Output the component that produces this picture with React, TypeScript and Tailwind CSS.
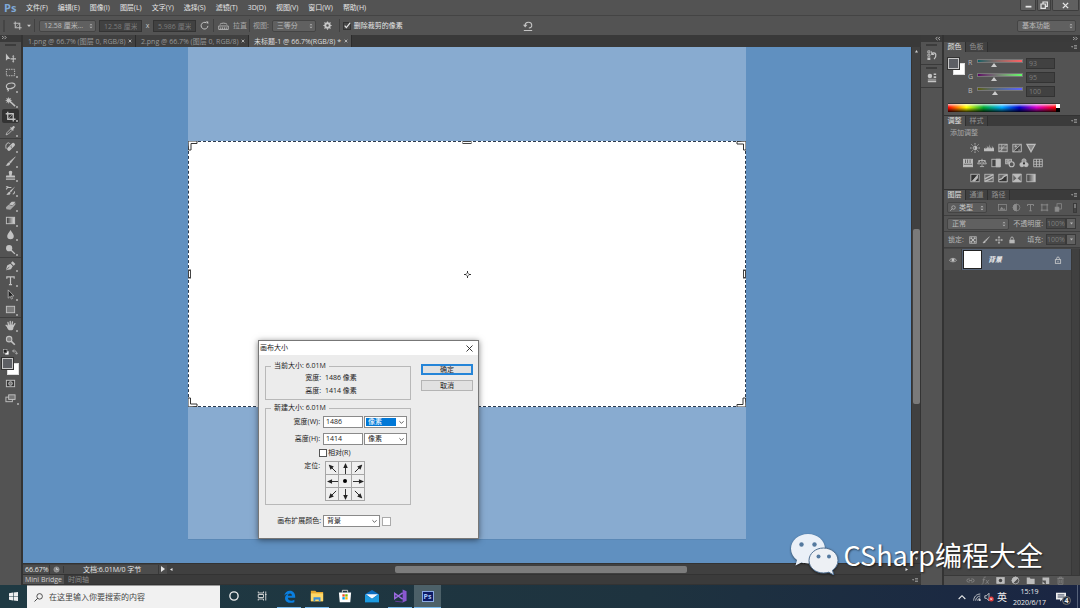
import type { ReactNode } from 'react';
import { useState } from 'react';
import clsx from 'clsx';

const MENUS = ['文件(F)', '编辑(E)', '图像(I)', '图层(L)', '文字(Y)', '选择(S)', '滤镜(T)', '3D(D)', '视图(V)', '窗口(W)', '帮助(H)'];

function Icon({ children, className = 'size-3', box = 12 }: { children: ReactNode; className?: string; box?: number }) {
  return (
    <svg viewBox={`0 0 ${box} ${box}`} className={clsx('shrink-0', className)} fill="none" stroke="currentColor" aria-hidden="true">
      {children}
    </svg>
  );
}

/* ---------- toolbox ---------- */

type Tool = { name: string; flyout?: boolean; art: ReactNode };

const cropArt = (
  <>
    <path d="M3 .8V9h8.500M.8 3H9v8.500" strokeWidth="1.400" />
    <path d="M3.500 8.500 8.500 3.500" strokeWidth=".6" />
  </>
);

const TOOL_GROUPS: Tool[][] = [
  [
    {
      name: '移动',
      art: (
        <>
          <path d="M1 1.500v8l2-2h2.800z" fill="currentColor" stroke="none" />
          <path d="M9 4.500v6M6 7.500h6" strokeWidth="1.100" />
          <path d="m9 3.400 1.300 1.400H7.700zM9 11.600l1.300-1.400H7.700z" fill="currentColor" stroke="none" />
        </>
      ),
    },
    { name: '矩形选框', flyout: true, art: <rect x="1.500" y="2.500" width="9" height="7" strokeDasharray="1.600 1" strokeWidth="1" /> },
    {
      name: '套索',
      flyout: true,
      art: (
        <path d="M3 8.200C.6 7 1 4 4 2.800s7-.6 7 1.700S6.800 9 4 8.300c-1.500-.3-2 .9-.7 1.200.8.200.6 1.500-.5 1.700" strokeWidth="1.300" />
      ),
    },
    {
      name: '魔棒',
      flyout: true,
      art: (
        <>
          <path d="m5 5.500 6 5.500" strokeWidth="1.700" />
          <path d="m4 .8.7 2.200 2-.9-.9 2 2.200.7-2.200.7.900 2-2-.9L4 8.800l-.7-2.200-2 .900.9-2L0 4.800l2.200-.7-.9-2 2 .9z" fill="currentColor" stroke="none" />
        </>
      ),
    },
    { name: '裁剪', flyout: true, art: cropArt },
    {
      name: '吸管',
      flyout: true,
      art: (
        <>
          <path d="m1.200 10.800 1-2.500 4-4 1.500 1.500-4 4z" strokeWidth=".9" />
          <path d="m5.500 3.200 1-.9.8.8 1.400-1.800c1-1 2.800.6 1.800 1.800L8.900 4.600l.8.800-1 1z" fill="currentColor" stroke="none" />
        </>
      ),
    },
  ],
  [
    {
      name: '污点修复画笔',
      flyout: true,
      art: (
        <>
          <path d="m4.300 8.700 4.600-4.600" strokeWidth="4" strokeLinecap="round" />
          <path d="M1.300 8.500C.3 5.500 1 2.500 3.500 2c1-.1 1.700.4 1.600 1.200" strokeWidth="1" />
          <path d="M5.600 6.300h.1M7 7.300h.1M7 5.600h.1" stroke="#535353" strokeWidth=".8" strokeLinecap="round" />
        </>
      ),
    },
    {
      name: '画笔',
      flyout: true,
      art: (
        <>
          <path d="M11.300.900 6 7.800 4.700 6.500z" fill="currentColor" strokeWidth=".5" />
          <path d="M4.300 6.800c1.300.4 1.700 1.700.8 2.800S2 11.200.6 10.300c1.700-.2 1.500-3 3.700-3.500z" fill="currentColor" stroke="none" />
        </>
      ),
    },
    {
      name: '仿制图章',
      flyout: true,
      art: (
        <path d="M4.800 6 4.200 3.200a1.900 1.900 0 1 1 3.600 0L7.200 6H10c.8 0 1 .5 1 2.200H1C1 6.500 1.200 6 2 6zM1 9.200h10v1.500H1z" fill="currentColor" stroke="none" />
      ),
    },
    {
      name: '历史记录画笔',
      flyout: true,
      art: (
        <>
          <path d="M11 1.500 6.500 8 5 6.700z" fill="currentColor" stroke="none" />
          <path d="M5 7.300c1.500.5 1.500 3-1 3.400-1 .2-2 0-2.700-.5C3 10 3 7.600 5 7.300z" fill="currentColor" stroke="none" />
          <path d="M1.200 4.800 3 2.600h4M1 2h2.700M8.500 10c1.500-.4 2-1.700 1.800-3" strokeWidth="1.100" />
        </>
      ),
    },
    {
      name: '橡皮擦',
      flyout: true,
      art: (
        <>
          <path d="m4.300 4.800 3-2.800h4L8.500 6z" fill="currentColor" stroke="none" />
          <path d="M1 8l2.800-2.700L8 6.500l3.300-3.700v2.400L5.800 10.500l-4.300-.3z" fill="currentColor" fillOpacity=".75" stroke="none" />
        </>
      ),
    },
    {
      name: '渐变',
      flyout: true,
      art: (
        <>
          <defs>
            <linearGradient id="toolGradient">
              <stop offset="0" stopColor="#333" />
              <stop offset="1" stopColor="#ddd" />
            </linearGradient>
          </defs>
          <rect x="1.500" y="2.500" width="9" height="7" fill="url(#toolGradient)" />
        </>
      ),
    },
    { name: '模糊', flyout: true, art: <path d="M6 1c1.500 3 3.600 4.500 3.600 6.700a3.600 3.600 0 0 1-7.200 0C2.400 5.500 4.500 4 6 1z" fill="currentColor" stroke="none" /> },
    {
      name: '减淡',
      flyout: true,
      art: (
        <>
          <circle cx="4.500" cy="4.500" r="3.400" fill="currentColor" stroke="none" />
          <path d="m6.500 6.500 4.300 4.300" strokeWidth="1.400" />
        </>
      ),
    },
  ],
  [
    {
      name: '钢笔',
      flyout: true,
      art: (
        <>
          <path d="M1 11.200 2.300 6l3.500-2L8.500 6.700l-2 3.500z" fill="currentColor" stroke="none" />
          <path d="m6.500 3.200 1.800-1.800 3 3-1.800 1.800z" fill="currentColor" stroke="none" />
          <path d="m1.500 10.800 3.300-3.400" stroke="#535353" strokeWidth=".8" />
        </>
      ),
    },
    { name: '横排文字', flyout: true, art: <path d="M2 4V2h8v2M6 2v8.300M4.300 10.400h3.400" strokeWidth="1.300" /> },
    { name: '路径选择', flyout: true, art: <path d="M3.500 1v9l2.200-2 1.300 3 1.200-.6L7 7.600h2.700z" fill="#222" strokeWidth=".8" /> },
    { name: '矩形', flyout: true, art: <rect x="1.500" y="2.500" width="9" height="7" fill="#7b7b7b" strokeWidth="1" /> },
  ],
  [
    {
      name: '抓手',
      flyout: true,
      art: (
        <>
          <path d="m4 6-.8-3.500M5.700 5.500V1.400M7.500 5.700l.7-3.700M9 7l1.800-3M3.500 8 1.200 5.800" strokeWidth="1.400" strokeLinecap="round" />
          <path d="M3 5.300h6.500l-.3 3.400c-.3 1.400-1 2.500-1.700 2.500h-3C3.500 10.500 2.500 9 2 7.300z" fill="currentColor" stroke="none" />
        </>
      ),
    },
    {
      name: '缩放',
      art: (
        <>
          <circle cx="4.500" cy="4.500" r="3" fill="#808080" strokeWidth="1.100" />
          <path d="m6.700 6.700 4 4" strokeWidth="1.700" />
        </>
      ),
    },
  ],
];

const GROUP_HEIGHTS = ['h-[89px]', 'h-[119px]', 'h-[60px]', 'h-[30px]'];

function Toolbox() {
  const [active, setActive] = useState('裁剪');
  return (
    <aside className="flex w-[23px] shrink-0 flex-col border-r-2 border-[#333] bg-[#535353] text-[#c2c2c2]">
      <div className="h-[7px] bg-[#3a3a3a] pl-0.5">
        <Icon className="h-[5px] w-[5px]" box={6}>
          <path d="m0 1 2 2-2 2M3 1l2 2-2 2" />
        </Icon>
      </div>
      <div className="mx-[5px] my-0.5 h-0.5 bg-[#3c3c3c]" />
      <div className="flex flex-col divide-y divide-[#3e3e3e] pt-0.5">
        {TOOL_GROUPS.map((group, i) => (
          <div key={i} className={clsx('flex flex-col px-0.5', GROUP_HEIGHTS[i])}>
            {group.map((t) => (
              <button
                key={t.name}
                type="button"
                aria-label={t.name}
                onClick={() => setActive(t.name)}
                className={clsx('relative flex flex-1 items-center justify-center rounded-xs', active === t.name && 'bg-[#333]')}
              >
                <Icon className="size-[11px]">{t.art}</Icon>
                {t.flyout && <i className="absolute right-px bottom-px size-[2px] bg-[#9c9c9c]" />}
              </button>
            ))}
          </div>
        ))}
      </div>
      <div className="flex h-2 items-center justify-between px-[3px]">
        <Icon className="size-[6px]">
          <rect x="5" y="5" width="6" height="6" fill="#fff" stroke="#ccc" />
          <rect x="1" y="1" width="7" height="7" fill="#222" stroke="#ccc" />
        </Icon>
        <Icon className="size-[6px]">
          <path d="M2 4h4c2 0 3 1 3 5M4 1 1 4l3 3M6.500 7.500 9 10.500l2.500-3" strokeWidth="1.600" />
        </Icon>
      </div>
      <div className="flex h-[20px] items-center justify-center">
        <Swatches />
      </div>
      <button type="button" aria-label="快速蒙版" className="flex h-[15px] items-center justify-center">
        <Icon className="size-[11px]">
          <rect x="1.500" y="2.500" width="9" height="7" fill="#333" />
          <circle cx="6" cy="6" r="2" fill="#777" />
        </Icon>
      </button>
      <button type="button" aria-label="屏幕模式" className="relative flex h-[15px] items-center justify-center">
        <Icon className="size-[11px]">
          <rect x="1" y="4.500" width="7" height="5" />
          <rect x="4" y="2" width="7" height="5" fill="#777" />
        </Icon>
        <i className="absolute right-0.5 bottom-px size-[2px] bg-[#9c9c9c]" />
      </button>
    </aside>
  );
}

function Swatches() {
  return (
    <div className="grid h-[17px] w-[17px] grid-cols-[5px_6px_6px] grid-rows-[5px_6px_6px]">
      <span className="col-span-2 col-start-2 row-span-2 row-start-2 border border-[#ddd] bg-white" />
      <span className="z-10 col-span-2 col-start-1 row-span-2 row-start-1 border border-[#c8c8c8] bg-[#5d5f64] outline outline-[#333]" />
    </div>
  );
}

/* ---------- menu + options ---------- */

function MenuBar() {
  return (
    <header className="flex h-[15px] shrink-0 items-center bg-[#535353] text-[7px] leading-[10px] text-[#e6e6e6]">
      <span className="w-[21px] pl-1 text-[11px] font-bold text-[#7fa9d8]">Ps</span>
      <nav className="flex">
        {MENUS.map((m) => (
          <button key={m} type="button" className="px-[5px] whitespace-nowrap">
            {m}
          </button>
        ))}
      </nav>
      <div className="mr-px ml-auto flex h-[11px] gap-px self-start text-[#e6e6e6]">
        <button type="button" aria-label="最小化" className="flex w-[16px] items-center justify-center rounded-b-xs border border-t-0 border-[#3d3d3d] bg-[#606060]">
          <Icon className="size-[7px]">
            <path d="M1 8h10" strokeWidth="3" />
          </Icon>
        </button>
        <button type="button" aria-label="还原" className="flex w-[14px] items-center justify-center rounded-b-xs border border-t-0 border-[#3d3d3d] bg-[#606060]">
          <Icon className="size-[8px]">
            <path d="M4.500 4V1.500h6.500V8H8.500M1.500 4.500H8V11H1.500z" strokeWidth="1.800" />
          </Icon>
        </button>
        <button type="button" aria-label="关闭" className="flex w-[27px] items-center justify-center rounded-b-xs border border-t-0 border-[#3d3d3d] bg-[#606060]">
          <Icon className="size-[7px]">
            <path d="m1.500 1.500 9 9m0-9-9 9" strokeWidth="2.400" />
          </Icon>
        </button>
      </div>
    </header>
  );
}

function DarkSelect({ label, value, className }: { label: string; value: string; className?: string }) {
  return (
    <span className={clsx('relative flex h-[12px]', className)}>
      <select
        aria-label={label}
        className="w-full appearance-none rounded-xs border border-[#444] bg-[#606060] pl-1 text-[7px] leading-[9px] text-[#bcbcbc]"
      >
        <option>{value}</option>
      </select>
      <Icon className="pointer-events-none absolute top-[3px] right-0.5 size-[6px] text-[#b0b0b0]">
        <path d="m3 4.500 3-3 3 3zM3 7.500l3 3 3-3z" fill="currentColor" stroke="none" />
      </Icon>
    </span>
  );
}

const divider = <span className="h-[13px] w-px shrink-0 bg-[#414141]" />;

function OptionsBar() {
  return (
    <div className="flex h-5 shrink-0 items-center border-t border-[#444] bg-[#535353] text-[7px] leading-[10px] text-[#8f8f8f]">
      <span className="ml-[3px] h-3 w-0.5 bg-[#454545]" />
      <Icon className="ml-2 size-[9px] text-[#bdbdbd]">{cropArt}</Icon>
      <Icon className="mr-[3px] ml-[5px] size-[4px] text-[#ccc]" box={6}>
        <path d="M0 1h6L3 4.500z" fill="currentColor" stroke="none" />
      </Icon>
      {divider}
      <DarkSelect label="裁剪预设" value="12.58 厘米..." className="ml-1 w-[57px]" />
      <input aria-label="宽度" defaultValue="12.58 厘米" className="ml-[3px] h-[12px] w-[43px] border border-[#333] bg-[#414141] px-1 text-[#7c7c7c]" />
      <span className="w-[11px] text-center text-[#c4c4c4]">x</span>
      <input aria-label="高度" defaultValue="5.986 厘米" className="h-[12px] w-[43px] border border-[#333] bg-[#414141] px-1 text-[#7c7c7c]" />
      <Icon className="mx-1 size-[9px] text-[#c4c4c4]">
        <path d="M10.500 6.500A4.500 4.500 0 1 1 8.500 2.500" strokeWidth="1.300" />
        <path d="M7.500.5h3.500v3.700z" fill="currentColor" stroke="none" />
      </Icon>
      {divider}
      <Icon className="mx-1 size-[11px] text-[#b8b8b8]">
        <path d="M.8 6.500h10.400v3.800H.8zM3 8v2M5 8v2M7 8v2M9 8v2" />
        <path d="M2 4.700C4 3 8 3 10 4.700" />
      </Icon>
      <button type="button" className="mr-0.5 whitespace-nowrap text-[#a8a8a8]">拉直</button>
      {divider}
      <span className="mx-[3px] whitespace-nowrap text-[#a8a8a8]">视图:</span>
      <DarkSelect label="视图" value="三等分" className="w-[44px]" />
      <button type="button" aria-label="其他裁切选项" className="mx-[7px] text-[#c8c8c8]">
        <Icon className="size-[9px]">
          <circle cx="6" cy="6" r="3" strokeWidth="2.600" />
          <path d="M6 .5v2M6 9.500v2M.5 6h2M9.500 6h2M2 2l1.500 1.500M8.500 8.500 10 10M10 2 8.500 3.500M3.500 8.500 2 10" strokeWidth="1.600" />
        </Icon>
      </button>
      {divider}
      <label className="ml-[3px] flex items-center gap-[3px] whitespace-nowrap text-[#e6e6e6]">
        <span className="relative flex">
          <input type="checkbox" defaultChecked className="size-[8px] appearance-none border border-[#333] bg-[#474747]" />
          <Icon className="pointer-events-none absolute top-0 left-0 size-[8px]">
            <path d="m2.500 5.500 2.500 3L11 1" strokeWidth="1.700" />
          </Icon>
        </span>
        删除裁剪的像素
      </label>
      <button type="button" aria-label="复位" className="ml-[120px] text-[#c4c4c4]">
        <Icon className="size-[10px]">
          <path d="M2.500 5A4 3.500 0 1 1 7 8.500M1 11.300h10" strokeWidth="1.300" />
          <path d="M0 4.500h5.400L2.600 7.700z" fill="currentColor" stroke="none" />
        </Icon>
      </button>
      <DarkSelect label="工作区" value="基本功能" className="mr-1 ml-auto w-[59px]" />
    </div>
  );
}

/* ---------- document ---------- */

const DOCS = [
  { title: '1.png @ 66.7% (图层 0, RGB/8)', width: 'w-[113px]' },
  { title: '2.png @ 66.7% (图层 0, RGB/8)', width: 'w-[113px]' },
  { title: '未标题-1 @ 66.7%(RGB/8) *', width: 'w-[103px]', active: true },
];

function DocumentTabs() {
  return (
    <div className="flex h-3 shrink-0 bg-[#393939] text-[7px] leading-[11px]">
      {DOCS.map((d) => (
        <div
          key={d.title}
          className={clsx(
            'flex items-center justify-between border-r border-[#2c2c2c] pr-[3px] pl-[5px] whitespace-nowrap',
            d.width,
            d.active ? 'bg-[#535353] text-[#dedede]' : 'bg-[#404040] text-[#989898]',
          )}
        >
          <button type="button">{d.title}</button>
          <button type="button" aria-label="关闭" className="text-[#c0c0c0]">
            <Icon className="size-[4px]" box={6}>
              <path d="m1 1 4 4m0-4L1 5" strokeWidth="1.300" />
            </Icon>
          </button>
        </div>
      ))}
    </div>
  );
}

function CropFrame() {
  const corner = 'M0 0h9v2.500H3V9H.5z';
  return (
    <div className="relative mt-[94px] h-[266px] bg-white outline-1 -outline-offset-1 outline-dashed outline-[#2b3a4d]">
      <Icon className="absolute top-0 left-0 size-[10px] text-[#333]" box={10}>
        <path d={corner} fill="#fff" />
      </Icon>
      <Icon className="absolute top-0 right-0 size-[10px] rotate-90 text-[#333]" box={10}>
        <path d={corner} fill="#fff" />
      </Icon>
      <Icon className="absolute right-0 bottom-0 size-[10px] rotate-180 text-[#333]" box={10}>
        <path d={corner} fill="#fff" />
      </Icon>
      <Icon className="absolute bottom-0 left-0 size-[10px] -rotate-90 text-[#333]" box={10}>
        <path d={corner} fill="#fff" />
      </Icon>
      <i className="absolute top-0 left-1/2 h-[3px] w-[9px] -translate-x-1/2 border border-[#444] bg-white" />
      <i className="absolute bottom-0 left-1/2 h-[3px] w-[9px] -translate-x-1/2 border border-[#444] bg-white" />
      <i className="absolute top-1/2 left-0 h-[9px] w-[3px] -translate-y-1/2 border border-[#444] bg-white" />
      <i className="absolute top-1/2 right-0 h-[9px] w-[3px] -translate-y-1/2 border border-[#444] bg-white" />
      <div className="flex h-full items-center justify-center text-[#333]">
        <Icon className="size-[7px]" box={7}>
          <path d="M3.500 0v2M3.500 5v2M0 3.500h2M5 3.500h2" />
          <circle cx="3.500" cy="3.500" r="1.500" strokeWidth=".6" />
        </Icon>
      </div>
    </div>
  );
}

function Workspace() {
  return (
    <main className="flex min-w-0 flex-1 flex-col">
      <DocumentTabs />
      <div className="flex min-h-0 flex-1">
        <div className="flex min-w-0 flex-1 justify-center bg-[#6090c0]">
          <div className="mb-[23px] w-[558px] border-b border-[#5a88b6] bg-[#88abd0]">
            <CropFrame />
          </div>
        </div>
        <div className="flex w-[10px] shrink-0 flex-col items-center border-x border-[#333] bg-[#404040] py-[3px] text-[#ccc]">
          <Icon className="size-[3px]" box={6}>
            <path d="M0 5h6L3 0z" fill="currentColor" stroke="none" />
          </Icon>
          <div className="mt-[176px] h-[175px] w-[7px] rounded-xs bg-[#7a7a7a]" />
          <Icon className="mt-auto size-[3px]" box={6}>
            <path d="M0 1h6L3 6z" fill="currentColor" stroke="none" />
          </Icon>
        </div>
      </div>
      <div className="flex h-[11px] shrink-0 items-center border-t border-[#333] bg-[#404040] text-[7px] leading-[9px] text-[#e6e6e6]">
        <div className="flex h-[9px] w-[144px] items-center divide-x divide-[#393939] bg-[#4c4c4c]">
          <span className="w-[27px] pl-0.5">66.67%</span>
          <span className="flex w-[14px] justify-center">
            <Icon className="size-[7px] text-[#aaa]">
              <circle cx="6" cy="6" r="4.500" fill="#888" />
              <path d="M6 3v3h3" stroke="#eee" />
            </Icon>
          </span>
          <span className="flex-1 pl-[19px] whitespace-nowrap">文档:6.01M/0 字节</span>
          <Icon className="h-[6px] w-[8px]" box={6}>
            <path d="M1 0v6l4-3z" fill="currentColor" stroke="none" />
          </Icon>
        </div>
        <div className="flex flex-1 items-center px-[3px]">
          <Icon className="size-[3px]" box={6}>
            <path d="M5 0v6L0 3z" fill="currentColor" stroke="none" />
          </Icon>
          <div className="ml-[222px] h-[7px] w-[39%] rounded-xs bg-[#7c7c7c]" />
          <Icon className="mr-[10px] ml-auto size-[3px]" box={6}>
            <path d="M1 0v6l5-3z" fill="currentColor" stroke="none" />
          </Icon>
        </div>
      </div>
      <div className="flex h-[11px] shrink-0 items-center border-y border-[#333] bg-[#3b3b3b] text-[7px] leading-[9px]">
        <button type="button" className="h-full w-[41px] bg-[#535353] whitespace-nowrap text-[#cfcfcf]">Mini Bridge</button>
        <button type="button" className="px-1 text-[#8e8e8e]">时间轴</button>
        <PanelMenu />
      </div>
    </main>
  );
}

/* ---------- panels ---------- */

function PanelMenu() {
  return (
    <button type="button" aria-label="面板菜单" className="mr-0.5 ml-auto text-[#aaa]">
      <Icon className="h-[6px] w-[8px]" box={8}>
        <path d="M0 3h3L1.500 5z" fill="currentColor" stroke="none" />
        <path d="M4 2h4M4 4h4M4 6h4" strokeWidth=".9" />
      </Icon>
    </button>
  );
}

function PanelTabs({ tabs }: { tabs: string[] }) {
  return (
    <div className="flex h-[10px] items-center bg-[#3b3b3b] text-[7px] leading-[10px]">
      {tabs.map((t, i) => (
        <button
          key={t}
          type="button"
          className={clsx('h-full w-[22px] border-r border-[#2f2f2f] whitespace-nowrap', i === 0 ? 'bg-[#535353] text-[#e2e2e2]' : 'bg-[#414141] text-[#929292]')}
        >
          {t}
        </button>
      ))}
      <PanelMenu />
    </div>
  );
}

const CHANNELS = [
  { name: 'R', value: 93, track: 'bg-linear-to-r from-[#005f64] to-[#ff5f64]' },
  { name: 'G', value: 95, track: 'bg-linear-to-r from-[#5d0064] to-[#5dff64]' },
  { name: 'B', value: 100, track: 'bg-linear-to-r from-[#5d5f00] to-[#5d5fff]' },
];

function ColorPanel() {
  const [rgb, setRgb] = useState(CHANNELS.map((c) => c.value));
  return (
    <section>
      <PanelTabs tabs={['颜色', '色板']} />
      <div className="h-[63px] pt-1 pr-[25px] pl-1">
        <div className="flex">
          <div className="w-[20px] pt-0.5">
            <Swatches />
          </div>
          <div className="flex-1">
            {CHANNELS.map((c, i) => (
              <div key={c.name} className="flex h-[14px] items-center text-[7px] leading-[10px] text-[#b8b8b8]">
                <label htmlFor={`slider-${c.name}`} className="w-[9px]">{c.name}</label>
                <span className="relative h-[9px] flex-1">
                  <span className={clsx('block h-1 border border-[#777]', c.track)} />
                  <input
                    id={`slider-${c.name}`}
                    type="range"
                    max="255"
                    value={rgb[i]}
                    onChange={(e) => setRgb(rgb.map((v, k) => (k === i ? Number(e.target.value) : v)))}
                    className="absolute inset-0 w-full opacity-0"
                  />
                  <svg viewBox="0 0 6 4" className="pointer-events-none absolute top-1 h-1 w-1.5 -translate-x-1/2" style={{ left: `${(rgb[i] / 255) * 100}%` }}>
                    <path d="M0 4h6L3 0z" fill="#ccc" />
                  </svg>
                </span>
                <input aria-label={`${c.name} 值`} value={rgb[i]} readOnly className="ml-[3px] h-[11px] w-[29px] border border-[#333] bg-[#414141] px-0.5 text-[#7c7c7c]" />
              </div>
            ))}
          </div>
        </div>
        <div className="mt-[5px] flex h-[9px] w-[112px] border-t border-[#333]">
          <div className="flex-1 bg-[linear-gradient(to_bottom,rgba(255,255,255,.75),rgba(255,255,255,0)_40%,rgba(0,0,0,0)_45%,rgba(0,0,0,.85)),linear-gradient(to_right,#f00,#ff0_17%,#0a3_33%,#0af_50%,#00c_66%,#d0c_82%,#f00)]" />
          <div className="flex w-1 flex-col">
            <i className="flex-1 bg-white" />
            <i className="flex-1 bg-black" />
          </div>
        </div>
      </div>
    </section>
  );
}

const frame = <rect x="1" y="1.500" width="10" height="9" fill="#666" />;

const ADJUSTMENTS: { name: string; art: ReactNode }[][] = [
  [
    {
      name: '亮度/对比度',
      art: (
        <>
          <circle cx="6" cy="6" r="2.200" />
          <path d="M6 3.800a2.200 2.200 0 0 1 0 4.400z" fill="currentColor" />
          <path d="M6 0v2M6 10v2M0 6h2M10 6h2M1.700 1.700l1.400 1.400M8.900 8.900l1.400 1.400M10.300 1.700 8.900 3.100M3.100 8.900l-1.400 1.400" />
        </>
      ),
    },
    { name: '色阶', art: <path d="M0 10h12V6l-1-1v2L9.500 3v4L8 5v2L6.500 1.500V7L5 4v3L3.500 3v4L2 5v2L0 6z" fill="currentColor" stroke="none" /> },
    { name: '曲线', art: <>{frame}<path d="M1 10C5 10 6 2 11 2M4.500 1.500v9M1 6h10" strokeWidth=".9" /></> },
    { name: '曝光度', art: <>{frame}<path d="m1 10.500 10-9v9z" fill="#444" /><path d="M3 4h3M4.500 2.500v3M7.500 8.500h2" /></> },
    { name: '自然饱和度', art: <path d="M1 1.500h10L6 10.500z" fill="#888" strokeWidth="1.500" /> },
  ],
  [
    { name: '色相/饱和度', art: <><rect x=".5" y="1.500" width="11" height="9" fill="currentColor" /><path d="M3 2v4M5.500 2v4M8.500 2v4M1 7.500h10" stroke="#555" /></> },
    { name: '色彩平衡', art: <path d="M6 1v8.500M3.500 10.300h5M2 3h8M2.500 3 .8 7h3.400zM9.500 3 7.300 7h3.900z" /> },
    { name: '黑白', art: <><rect x="1" y="1.500" width="10" height="9" fill="#444" /><path d="M6 1.500h5v9H6z" fill="currentColor" /></> },
    { name: '照片滤镜', art: <><rect x=".8" y="1.500" width="7" height="5.500" fill="#888" /><circle cx="8" cy="7.500" r="3" fill="#555" strokeWidth="1.400" /><circle cx="3.800" cy="4.200" r="1.200" /></> },
    { name: '通道混合器', art: <><circle cx="6" cy="3.500" r="2.500" fill="#999" /><circle cx="3.500" cy="8" r="2.500" fill="currentColor" /><circle cx="8.500" cy="8" r="2.500" fill="currentColor" /><circle cx="6" cy="6.500" r="1.300" fill="#333" stroke="none" /></> },
    { name: '颜色查找', art: <path d="M.8 1.500h10.400v9H.8zM.8 4.500h10.400M.8 7.500h10.400M4.200 1.500v9M7.700 1.500v9" /> },
  ],
  [
    { name: '反相', art: <><rect x="1" y="1.500" width="10" height="9" fill="#333" /><path d="M3 9.500 9 2.500v3.500L6 9.500z" fill="currentColor" /></> },
    { name: '色调分离', art: <>{frame}<path d="m1 7 4-2 6-3M1 10l5-2 5-3" strokeWidth="1.500" /></> },
    { name: '阈值', art: <>{frame}<path d="M1 10.500V8l4-1 1-3 5-2v8.500z" fill="#333" /><path d="m1.500 8 4-1.500L7 4.500l4-2" strokeWidth="1.300" /></> },
    { name: '可选颜色', art: <>{frame}<path d="m1 1.500 5 5 5-5zM1 10.500l5-4 5 4z" fill="currentColor" /></> },
    { name: '渐变映射', art: <><rect x="1" y="1.500" width="10" height="9" fill="url(#mapGradient)" /><defs><linearGradient id="mapGradient"><stop stopColor="#333" /><stop offset="1" stopColor="#ccc" /></linearGradient></defs></> },
  ],
];

function AdjustmentsPanel() {
  return (
    <section className="border-t border-[#333]">
      <PanelTabs tabs={['调整', '样式']} />
      <div className="h-[63px] pt-0.5 text-[#bdbdbd]">
        <p className="pl-1.5 text-[7px] leading-[10px] text-[#a8a8a8]">添加调整</p>
        <div className="w-[118px] pt-0.5">
          {ADJUSTMENTS.map((row, i) => (
            <div key={i} className="flex h-[15px] items-center justify-center gap-1">
              {row.map((a) => (
                <button key={a.name} type="button" aria-label={a.name}>
                  <Icon className="size-[10px]">{a.art}</Icon>
                </button>
              ))}
            </div>
          ))}
        </div>
      </div>
    </section>
  );
}

const lockArt = (
  <>
    <rect x="2" y="5.500" width="8" height="5.500" fill="currentColor" stroke="none" />
    <path d="M4 5.500V3.500a2 2 0 0 1 4 0v2" strokeWidth="1.300" />
  </>
);

const FILTERS: { name: string; art: ReactNode }[] = [
  { name: '像素图层', art: <><rect x=".8" y="2" width="10.400" height="8" /><path d="m2 9 3-4 2 3 1.500-1L10 9z" fill="currentColor" stroke="none" /></> },
  { name: '调整图层', art: <><circle cx="6" cy="6" r="4.500" /><path d="M6 1.500a4.500 4.500 0 0 0 0 9z" fill="currentColor" /></> },
  { name: '文字图层', art: <path d="M2 4V2h8v2M6 2v8.500M4.300 10.400h3.400" strokeWidth="1.200" /> },
  { name: '形状图层', art: <path d="M2.500 1v10M9.500 1v10M1 2.500h10M1 9.500h10" strokeWidth="1.200" /> },
  { name: '智能对象', art: <><rect x="4" y="1" width="6" height="7" /><rect x="1.500" y="5.500" width="5" height="5.500" fill="currentColor" /></> },
];

const LAYER_ACTIONS: { name: string; art: ReactNode; dim?: boolean }[] = [
  { name: '链接图层', dim: true, art: <path d="M5 4H3.200a2 2 0 0 0 0 4H5M7 4h1.800a2 2 0 0 1 0 4H7M4 6h4" strokeWidth="1.200" /> },
  { name: '图层样式', dim: true, art: <path d="M1 11c1.500 0 1.700-1 2-3l.7-4.500C4 1.500 5 1 6.300 1.500M2 5h3.500M6.500 5.500c2 0 1.500 4.500 4 4.500M11 5.500c-2 0-2.500 4.500-5 4.500" strokeWidth="1.100" /> },
  { name: '添加蒙版', art: <><rect x="1" y="2" width="10" height="8" fill="currentColor" /><circle cx="6" cy="6" r="2.300" fill="#444" stroke="none" /></> },
  { name: '新建调整图层', art: <><circle cx="6" cy="6" r="4.500" /><path d="M9.200 2.800a4.500 4.500 0 0 0-6.400 6.400z" fill="currentColor" /></> },
  { name: '新建组', art: <path d="M1 2h4l1 1.500h5.500V10.500H1z" fill="currentColor" stroke="none" /> },
  { name: '新建图层', art: <><path d="M2 2h9v8.500H6.500V6H2z" fill="currentColor" stroke="none" /><path d="m2 7 3.500 3.500H2z" fill="currentColor" stroke="none" /></> },
  { name: '删除图层', dim: true, art: <path d="M1.500 3h9M4.500 3V1.500h3V3M2.800 3.500h6.400v7.500H2.800zM5 5v4.500M7 5v4.500" /> },
];

function PercentField({ label }: { label: string }) {
  return (
    <label className="ml-auto flex items-center gap-[3px] whitespace-nowrap">
      {label}
      <span className="flex">
        <input defaultValue="100%" className="h-[11px] w-[20px] border border-[#3a3a3a] bg-[#474747] text-[#7e7e7e]" />
        <span className="flex h-[11px] w-[10px] items-center justify-center border border-[#3a3a3a] bg-[#616161]">
          <Icon className="size-[3px]" box={6}>
            <path d="M0 1h6L3 5z" fill="currentColor" stroke="none" />
          </Icon>
        </span>
      </span>
    </label>
  );
}

function LayersPanel() {
  return (
    <section className="flex min-h-0 flex-1 flex-col border-t border-[#333] text-[7px] leading-[10px] text-[#b8b8b8]">
      <PanelTabs tabs={['图层', '通道', '路径']} />
      <div className="flex h-[16px] items-center border-b border-[#3e3e3e] pr-0.5 pl-[3px]">
        <span className="relative flex w-[40px]">
          <select aria-label="筛选类型" className="h-[11px] w-full appearance-none rounded-xs border border-[#444] bg-[#5c5c5c] pl-[11px] text-[7px] leading-[9px] text-[#c8c8c8]">
            <option>类型</option>
          </select>
          <Icon className="pointer-events-none absolute top-[3px] left-[3px] size-[6px]">
            <circle cx="7" cy="5" r="3.500" strokeWidth="1.500" />
            <path d="m4.500 7.500-4 4" strokeWidth="1.500" />
          </Icon>
          <Icon className="pointer-events-none absolute top-[3px] right-0.5 size-[6px]">
            <path d="m3 4.500 3-3 3 3zM3 7.500l3 3 3-3z" fill="currentColor" stroke="none" />
          </Icon>
        </span>
        <div className="ml-[11px] flex gap-[5px] text-[#8c8c8c]">
          {FILTERS.map((f) => (
            <button key={f.name} type="button" aria-label={f.name}>
              <Icon className="size-[9px]">{f.art}</Icon>
            </button>
          ))}
        </div>
        <span className="mr-px ml-auto h-[10px] w-1 border border-[#3a3a3a] bg-linear-to-b from-[#777] from-50% to-[#444] to-50%" />
      </div>
      <div className="flex h-[16px] items-center border-b border-[#3e3e3e] pr-1 pl-[3px]">
        <DarkSelect label="混合模式" value="正常" className="w-[62px]" />
        <PercentField label="不透明度:" />
      </div>
      <div className="flex h-[16px] items-center gap-[5px] border-b border-[#3e3e3e] pr-1 pl-1">
        <span className="whitespace-nowrap">锁定:</span>
        <Icon className="size-[8px]">
          <rect x="1" y="1" width="10" height="10" />
          <path d="M2 2h3v3H2zM7 2h3v3H7zM4.500 4.500h3v3h-3zM2 7h3v3H2zM7 7h3v3H7z" fill="currentColor" stroke="none" />
        </Icon>
        <Icon className="size-[8px]">{TOOL_GROUPS[1][1].art}</Icon>
        <Icon className="size-[8px]">
          <path d="M6 1v10M1 6h10" />
          <path d="M6 0 4 2.500h4zM6 12l-2-2.500h4zM0 6l2.500-2v4zM12 6 9.500 4v4z" fill="currentColor" stroke="none" />
        </Icon>
        <Icon className="size-[8px]">{lockArt}</Icon>
        <PercentField label="填充:" />
      </div>
      <div className="flex min-h-0 flex-1 bg-[#464646] pt-px">
        <div className="flex-1">
          <div className="flex h-[21px] items-center bg-[#596679] text-[#eee]">
            <button type="button" aria-label="显示图层" className="flex h-full w-[18px] items-center justify-center border-r border-[#424242] bg-[#535353] text-[#c4c4c4]">
              <Icon className="size-[8px]">
                <path d="M.5 6.500C3 2.500 9 2.500 11.500 6.500 9 9.500 3 9.500.5 6.500z" />
                <circle cx="6" cy="6" r="1.800" fill="currentColor" />
              </Icon>
            </button>
            <span className="ml-px size-[19px] border border-[#222] bg-white" />
            <span className="ml-1.5 font-bold italic">背景</span>
            <Icon className="mr-[9px] ml-auto size-[8px] text-[#d0d0d0]">
              <rect x="2" y="5.500" width="8" height="5.500" strokeWidth="1.200" />
              <path d="M4 5.500V3.500a2 2 0 0 1 4 0v2M6 7.500v2" strokeWidth="1.200" />
            </Icon>
          </div>
        </div>
        <div className="w-[9px] border-x border-[#383838] bg-[#404040]" />
      </div>
      <div className="flex h-[10px] items-center justify-end gap-[6px] border-t border-[#383838] pr-[15px] text-[#bcbcbc]">
        {LAYER_ACTIONS.map((a) => (
          <button key={a.name} type="button" aria-label={a.name} className={a.dim ? 'text-[#868686]' : undefined}>
            <Icon className="size-[9px]">{a.art}</Icon>
          </button>
        ))}
      </div>
    </section>
  );
}

function IconDock() {
  return (
    <aside className="flex w-[23px] shrink-0 flex-col border-r-2 border-[#333] bg-[#535353] text-[#c4c4c4]">
      <div className="flex h-[7px] items-center justify-end bg-[#3a3a3a] pr-0.5">
        <Icon className="size-[5px]" box={6}>
          <path d="M3 1 1 3l2 2M6 1 4 3l2 2" />
        </Icon>
      </div>
      <div className="flex h-[23px] flex-col items-center border-b border-[#3a3a3a] pt-0.5">
        <span className="h-0.5 w-[11px] bg-[#3c3c3c]" />
        <button type="button" aria-label="历史记录" className="pt-1">
          <Icon className="size-[10px]">
            <path d="M1 1h2.500v2.500H1zM1 5h2.500v2.500H1z" />
            <path d="M.5 9H4v3H.5z" fill="currentColor" stroke="none" />
            <path d="M7 3.500c4-1 5 4 1.500 7.500" strokeWidth="1.500" />
            <path d="M5 1v5h4z" fill="currentColor" stroke="none" />
          </Icon>
        </button>
      </div>
      <div className="flex h-[23px] flex-col items-center border-b border-[#3a3a3a] pt-0.5">
        <span className="h-0.5 w-[11px] bg-[#3c3c3c]" />
        <button type="button" aria-label="属性" className="pt-1">
          <Icon className="size-[10px]">
            <circle cx="3.500" cy="3.500" r="2.700" fill="currentColor" stroke="none" />
            <path d="M8 1.500h3M8 5h3M1 10h10" strokeWidth="2" />
            <path d="M1 7.500h10" strokeWidth=".8" />
          </Icon>
        </button>
      </div>
    </aside>
  );
}

/* ---------- dialog ---------- */

function LightSelect({ id, label, value, className, focused }: { id: string; label?: string; value: string; className?: string; focused?: boolean }) {
  return (
    <span className={clsx('relative flex h-[12px] border border-[#8a8a8a] bg-white p-px', className)}>
      <select id={id} aria-label={label} className={clsx('mr-[9px] w-full appearance-none pl-0.5 text-[7px] leading-[8px]', focused && 'bg-[#0078d7] text-white')}>
        <option>{value}</option>
      </select>
      <Icon className="pointer-events-none absolute top-[3px] right-0.5 size-[5px] text-[#444]" box={6}>
        <path d="m.5 1.500 2.500 2.500 2.500-2.500" />
      </Icon>
    </span>
  );
}

const ANCHORS = [-45, 0, 45, -90, null, 90, -135, 180, 135];
const ROTATIONS: Record<string, string> = {
  '-45': '-rotate-45',
  '0': 'rotate-0',
  '45': 'rotate-45',
  '-90': '-rotate-90',
  '90': 'rotate-90',
  '-135': 'rotate-225',
  '180': 'rotate-180',
  '135': 'rotate-135',
};

function CanvasSizeDialog() {
  const input = 'h-[12px] w-[40px] border border-[#8a8a8a] bg-white pl-0.5';
  return (
    <div role="dialog" aria-label="画布大小" className="absolute top-[340px] left-[258px] w-[221px] border border-[#777] bg-[#ececec] pb-[11px] text-[7px] leading-[10px] text-[#222] shadow-[0_1px_6px_rgba(0,0,0,0.5)]">
      <div className="flex h-[14px] items-center justify-between bg-white pr-[5px] pl-px">
        <h2>画布大小</h2>
        <button type="button" aria-label="关闭">
          <Icon className="size-[7px]" box={7}>
            <path d="m.5.5 6 6m0-6-6 6" strokeWidth=".9" />
          </Icon>
        </button>
      </div>
      <form className="flex pt-[6px] pl-[6px]">
        <div className="w-[146px]">
          <fieldset className="border border-[#b8b8b8] pb-0.5">
            <legend className="ml-[5px] px-[3px]">当前大小: 6.01M</legend>
            <dl className="grid grid-cols-[55px_1fr] gap-x-1 leading-[13px]">
              <dt className="text-right">宽度:</dt>
              <dd>1486 像素</dd>
              <dt className="text-right">高度:</dt>
              <dd>1414 像素</dd>
            </dl>
          </fieldset>
          <fieldset className="mt-[3px] border border-[#b8b8b8] pb-[3px]">
            <legend className="ml-[5px] px-[3px]">新建大小: 6.01M</legend>
            <div className="flex h-[17px] items-center">
              <label htmlFor="canvas-w" className="w-[57px] pr-[3px] text-right whitespace-nowrap">宽度(W):</label>
              <input id="canvas-w" defaultValue="1486" className={input} />
              <LightSelect id="width-unit" label="宽度单位" value="像素" focused className="ml-px w-[43px]" />
            </div>
            <div className="flex h-[17px] items-center">
              <label htmlFor="canvas-h" className="w-[57px] pr-[3px] text-right whitespace-nowrap">高度(H):</label>
              <input id="canvas-h" defaultValue="1414" className={input} />
              <LightSelect id="height-unit" label="高度单位" value="像素" className="ml-px w-[43px]" />
            </div>
            <label className="ml-[53px] flex h-[12px] items-center gap-px">
              <input type="checkbox" className="size-[8px] appearance-none border border-[#555] bg-white" />
              相对(R)
            </label>
            <div className="flex pt-0.5">
              <span className="w-[59px] pr-[5px] text-right">定位:</span>
              <div className="grid grid-cols-3 gap-px border border-[#a6a6a6] bg-[#a6a6a6]">
                {ANCHORS.map((a, i) => (
                  <button key={i} type="button" aria-label={`定位 ${i + 1}`} className="flex size-[12px] items-center justify-center bg-[#efefef]">
                    {a === null ? (
                      <i className="size-1 rounded-full bg-black" />
                    ) : (
                      <Icon className={clsx('size-[11px]', ROTATIONS[String(a)])}>
                        <path d="M6 3v9" />
                        <path d="m6 0 2.500 5.500h-5z" fill="currentColor" stroke="none" />
                      </Icon>
                    )}
                  </button>
                ))}
              </div>
            </div>
          </fieldset>
          <div className="mt-[10px] flex h-[12px] items-center">
            <label htmlFor="extension-color" className="w-[58px] pr-0.5 text-right whitespace-nowrap">画布扩展颜色:</label>
            <LightSelect id="extension-color" value="背景" className="w-[57px]" />
            <button type="button" aria-label="选择颜色" className="ml-0.5 size-[9px] border border-[#aaa] bg-white" />
          </div>
        </div>
        <div className="ml-[10px] flex w-[52px] flex-col gap-[5px] pt-[3px]">
          <button type="button" className="h-[11px] border-2 border-[#2585d8] bg-[#e1e1e1] leading-[7px]">确定</button>
          <button type="button" className="h-[11px] border border-[#b4b4b4] bg-[#e1e1e1] leading-[9px]">取消</button>
        </div>
      </form>
    </div>
  );
}

/* ---------- taskbar ---------- */

const TASKS: { name: string; art: ReactNode; running?: boolean; size?: string }[] = [
  { name: 'Cortana', size: 'size-[12px]', art: <circle cx="8" cy="8" r="5.500" stroke="#eee" strokeWidth="1.800" /> },
  { name: '任务视图', size: 'size-[12px]', art: <path d="M3 2v2h7V2M3 14v-2h7v2M3 6h7v4H3zM13 2v12M12 6h2" stroke="#ddd" strokeWidth="1.200" /> },
  {
    name: 'Edge',
    running: true,
    size: 'size-[13px]',
    art: (
      <path
        d="M1.500 7C2.500 3 5 1 8.500 1 12.500 1 15 4 15 8v1.500H6c0 4 5 4.500 8 2.500v3c-5 2-11.500.5-11.500-5 0-2.500 1.500-4.500 4-5.500C4.500 4.700 2.500 5.500 1.500 7zM6 7h5c0-3.700-4.500-3.700-5 0z"
        fill="#0a7fe0"
        stroke="none"
      />
    ),
  },
  {
    name: '文件资源管理器',
    running: true,
    art: (
      <>
        <path d="M1 2h5l1.500 1.500H15V14H1z" fill="#e8a92f" stroke="none" />
        <path d="M1 5h14v9H1z" fill="#ffd868" stroke="none" />
        <path d="M4 14v-4.500h8V14h-2v-2H6v2z" fill="#3c8fd6" stroke="none" />
      </>
    ),
  },
  {
    name: 'Microsoft Store',
    art: (
      <>
        <path d="M5 4V1.500h6V4" stroke="#ddd" />
        <path d="M1 4h14l-1 11H2z" fill="#fff" stroke="none" />
        <path d="M5 6h2.700v2.700H5z" fill="#f25022" stroke="none" />
        <path d="M8.300 6H11v2.700H8.300z" fill="#7fba00" stroke="none" />
        <path d="M5 9.300h2.700V12H5z" fill="#00a4ef" stroke="none" />
        <path d="M8.300 9.300H11V12H8.300z" fill="#ffb900" stroke="none" />
      </>
    ),
  },
  {
    name: '邮件',
    art: (
      <>
        <path d="m0 6 8-5 8 5v9H0z" fill="#0c6cbf" stroke="none" />
        <path d="M1 6h14l-7 5z" fill="#f4f9ff" stroke="none" />
        <path d="m0 6 8 5.500L16 6v9H0z" fill="#1d9be0" stroke="none" />
      </>
    ),
  },
  {
    name: 'Visual Studio',
    running: true,
    art: (
      <>
        <path d="m11 .5 4.500 2v11L11 15.500z" fill="#8a57cf" stroke="none" />
        <path d="M11 11.500 2 5v6l9-6.500" stroke="#9b6ae0" strokeWidth="1.700" />
        <path d="m2.500 14 9 1" stroke="#6b3fa8" strokeWidth="1" />
      </>
    ),
  },
];

function Taskbar() {
  return (
    <footer className="flex h-[23px] shrink-0 items-stretch bg-linear-to-r from-[#1f3a43] via-[#1e333f] via-60% to-[#1a2543] text-[#eee]">
      <button type="button" aria-label="开始" className="flex w-[27px] items-center justify-center">
        <Icon className="size-[9px]" box={9}>
          <path d="M0 1.200 4 .6v3.600H0zM4.600.5 9 0v4.200H4.600zM0 4.800h4v3.600l-4-.6zM4.600 4.800H9V9l-4.400-.5z" fill="currentColor" stroke="none" />
        </Icon>
      </button>
      <label className="flex w-[193px] items-center border-t border-[#999] bg-[#f1f1f1] pl-[7px] text-[#333]">
        <Icon className="size-[9px]">
          <circle cx="7.500" cy="4.500" r="3.700" strokeWidth="1.100" />
          <path d="m5 7-4.300 4.300" strokeWidth="1.200" />
        </Icon>
        <input aria-label="搜索" placeholder="在这里输入你要搜索的内容" className="ml-[6px] w-full text-[8px] leading-[12px] placeholder:text-[#444]" />
      </label>
      <nav className="flex w-[221px]">
        {TASKS.map((t) => (
          <button
            key={t.name}
            type="button"
            aria-label={t.name}
            className={clsx('mx-[2px] flex flex-1 items-center justify-center border-b', t.running ? 'border-[#76b9ed]' : 'border-transparent')}
          >
            <Icon className={t.size ?? 'size-[14px]'} box={16}>{t.art}</Icon>
          </button>
        ))}
        <button type="button" aria-label="Photoshop" className="flex w-[27px] items-center justify-center border-b border-[#76b9ed] bg-[#4c6068]">
          <span className="flex h-[11px] w-[12px] items-center justify-center border border-[#8aa8e0] bg-[#0c1a66] text-[7px] leading-[9px] font-bold text-[#a9c8f5]">Ps</span>
        </button>
      </nav>
      <div className="ml-auto flex items-center">
        <Icon className="size-[8px]">
          <path d="m1 9 5-5 5 5" strokeWidth="1.600" />
        </Icon>
        <Icon className="ml-[7px] size-[8px]">
          <path d="M1 11.500C1 6 5 1.500 11 1.500M4 11.500C4 8 7 4.500 11 4.500M7 11.500c0-2 2-4 4-4" strokeWidth="1.100" />
          <circle cx="10" cy="10.500" r="1.200" fill="currentColor" />
        </Icon>
        <Icon className="ml-[3px] size-[10px]">
          <path d="M1 4.500h2l3-3v9l-3-3H1z" strokeWidth=".9" />
          <circle cx="8.700" cy="8.500" r="3" fill="#e23b3b" stroke="none" />
          <path d="m7.500 7.300 2.400 2.400m0-2.400L7.500 9.700" strokeWidth=".9" />
        </Icon>
        <span className="ml-[3px] text-[10px] leading-[12px]">英</span>
        <time className="mx-[5px] w-[35px] text-center text-[7px] leading-[11px] whitespace-nowrap">
          15:19
          <br />
          2020/6/17
        </time>
        <button type="button" aria-label="4 条通知" className="relative mr-[6px] ml-1 flex w-[15px]">
          <Icon className="size-[10px]">
            <path d="M0 1h12v8H7.500L5 11.500V9H0z" fill="currentColor" stroke="none" />
            <path d="M2 3.500h8M2 6h8" stroke="#1b2745" />
          </Icon>
          <span className="absolute right-0 -bottom-[3px] flex size-[9px] items-center justify-center rounded-full border border-[#777] bg-[#222b3a] text-[7px] leading-[7px] font-bold">4</span>
        </button>
        <span className="mr-0.5 h-full w-px bg-[#56627a]" />
      </div>
    </footer>
  );
}

function Watermark() {
  return (
    <div className="pointer-events-none absolute right-[37px] bottom-[33px] flex items-center gap-[6px] text-white">
      <svg viewBox="0 0 47 41" className="h-[41px] w-[47px] drop-shadow-[0_1px_1px_rgba(0,0,0,0.5)]" aria-hidden="true">
        <path d="M17 0C7.500 0 0 6.500 0 14.700c0 4.500 2.300 8.500 6 11.200L4.500 31.500l6-3c2 .6 4 .9 6.500.9C26.500 29.400 34 23 34 14.700S26.500 0 17 0z" fill="#eaf0f8" />
        <path d="M32.500 14C24.500 14 18 19.500 18 26.500S24.500 39 32.500 39c1.900 0 3.600-.3 5.300-.8l5 2.800-1.300-4.700c3.300-2.400 5.500-5.800 5.500-9.800C47 19.500 40.500 14 32.500 14z" fill="#edf0f4" stroke="#4f6f92" strokeWidth="1" />
        <g fill="#54799f">
          <circle cx="10.500" cy="10.500" r="2.200" />
          <circle cx="23.500" cy="10.500" r="2.200" />
          <circle cx="27.500" cy="22.500" r="2" />
          <circle cx="38" cy="22.500" r="2" />
        </g>
      </svg>
      <span className="font-['Noto_Sans_CJK_SC',sans-serif] text-[27px] leading-[40px] whitespace-nowrap [text-shadow:1px_1px_2px_rgba(0,0,0,0.6)]">CSharp编程大全</span>
    </div>
  );
}

export default function App() {
  return (
    <div className="relative flex h-screen flex-col overflow-hidden bg-[#535353] font-['Open_Sans','Noto_Sans_CJK_SC',sans-serif]">
      <MenuBar />
      <OptionsBar />
      <div className="flex min-h-0 flex-1">
        <Toolbox />
        <Workspace />
        <IconDock />
        <div className="flex w-[136px] shrink-0 flex-col bg-[#535353]">
          <div className="flex h-[7px] items-center justify-end bg-[#3a3a3a] pr-0.5 text-[#c4c4c4]">
            <Icon className="size-[5px]" box={6}>
              <path d="m0 1 2 2-2 2M3 1l2 2-2 2" />
            </Icon>
          </div>
          <ColorPanel />
          <AdjustmentsPanel />
          <LayersPanel />
        </div>
      </div>
      <Taskbar />
      <CanvasSizeDialog />
      <Watermark />
    </div>
  );
}
